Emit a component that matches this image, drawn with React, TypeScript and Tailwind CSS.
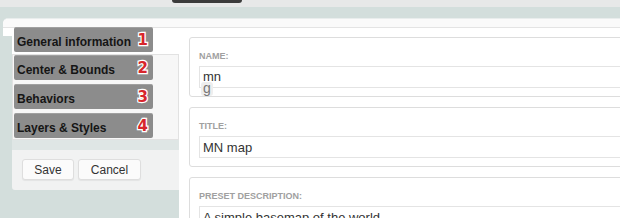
import React from 'react'

const tabs = [
  { label: 'General information', num: '1' },
  { label: 'Center & Bounds', num: '2' },
  { label: 'Behaviors', num: '3' },
  { label: 'Layers & Styles', num: '4' },
]

function Tab({ label, num, className = '' }: { label: string; num: string; className?: string }) {
  return (
    <div
      className={`flex items-center justify-between w-[139px] h-[25px] pl-[3px] pr-[5px] rounded-[2px] bg-[#8c8c8c] border-t border-[#a0a0a0] ${className}`}
    >
      <span className="pt-[3px] whitespace-nowrap text-[12px] font-bold leading-none text-[#151515]">{label}</span>
      <span className="font-['DejaVu_Sans',sans-serif] text-[15px] font-bold leading-none text-[#d8262c] [-webkit-text-stroke:2.5px_white] [paint-order:stroke_fill]">
        {num}
      </span>
    </div>
  )
}

function Field({
  label,
  value,
  inputPad,
  glitch = false,
}: {
  label: string
  value: string
  inputPad: string
  glitch?: boolean
}) {
  return (
    <div className="h-[60px] w-[480px] mb-[10px] rounded-[3px] border border-[#dddddd] bg-white pl-[9px] pt-[13px] overflow-hidden">
      <div className="text-[9px] font-bold leading-[11px] text-[#a0a0a0]">{label}</div>
      <div className="relative mt-[4px] h-[22px] border border-[#e4e4e4] pl-[3px]">
        <div className={`whitespace-nowrap text-[13px] leading-[16px] text-[#333333] ${inputPad}`}>{value}</div>
        {glitch && (
          <div className="absolute left-[1px] top-[15px] w-[12px] h-[14px] rounded-[3px] bg-[#eeeeee] text-[14px] leading-[12px] text-[#777777] pl-[2px]">
            g
          </div>
        )}
      </div>
    </div>
  )
}

export default function App() {
  return (
    <div className="w-[620px] h-[218px] overflow-hidden bg-[#d3dedc] font-['Liberation_Sans',Arial,sans-serif]">
      <div className="h-[7px] bg-[#e7e8e8]">
        <div className="ml-[172px] w-[70px] h-[3px] rounded-b-[5px] bg-[#3b3b3b]" />
      </div>
      <div className="h-[11px]" />
      <div className="ml-[3px] h-[18px] rounded-tl-[5px] border-t border-[#e9eded] bg-white">
        <div className="h-[9px] rounded-tl-[5px] bg-[#fafafa] border-b border-[#e4e4e4]" />
      </div>
      <div className="-mt-[8px] flex h-[190px]">
        <div className="ml-[12px] w-[167px] shrink-0 flex flex-col">
          <div className="h-[26px] bg-white pl-[2px]">
            <Tab {...tabs[0]} className="-mt-px" />
          </div>
          <div className="flex flex-col gap-[4px] border border-[#e2e2e2] bg-[#f7f7f7] pl-[1px] pb-px">
            {tabs.slice(1).map(t => (
              <Tab key={t.num} {...t} />
            ))}
          </div>
          <div className="h-[10px] bg-[#dfe6e5]" />
          <div className="h-[40px] rounded-bl-[3px] bg-[#f1f2f2] flex items-start gap-[4px] pl-[10px] pt-[9px]">
            <button className="w-[52px] h-[21px] rounded-[3px] border border-[#dedede] bg-[#fbfbfb] text-[12px] text-[#333333] shadow-[0_1px_1px_rgba(0,0,0,0.06)]">
              Save
            </button>
            <button className="w-[63px] h-[21px] rounded-[3px] border border-[#dedede] bg-[#fbfbfb] text-[12px] text-[#333333] shadow-[0_1px_1px_rgba(0,0,0,0.06)]">
              Cancel
            </button>
          </div>
        </div>
        <div className="flex-1 bg-white pl-[10px] pt-[9px] overflow-hidden">
          <Field label="NAME:" value="mn" inputPad="pt-[2px]" glitch />
          <Field label="TITLE:" value="MN map" inputPad="pt-[3px]" />
          <Field label="PRESET DESCRIPTION:" value="A simple basemap of the world" inputPad="pt-[3px]" />
        </div>
      </div>
    </div>
  )
}
